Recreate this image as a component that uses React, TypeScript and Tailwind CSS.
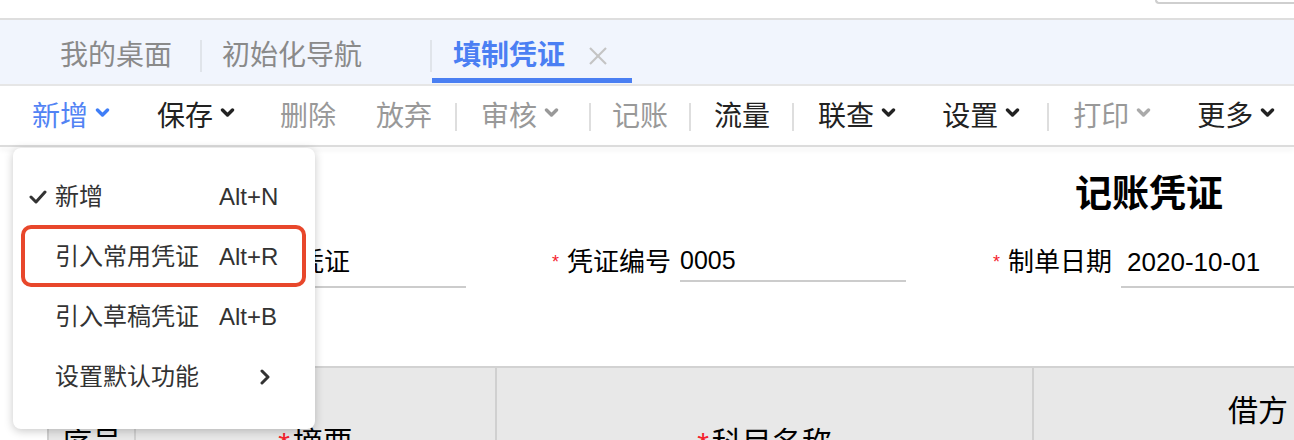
import React from "react";

const Chev = ({ color }: { color: string }) => (
  <svg width="15" height="10" viewBox="0 0 15 10" className="ml-[7px] mb-[7px] shrink-0">
    <polyline points="2.5,2 7.5,7 12.5,2" fill="none" stroke={color} strokeWidth="3.4" strokeLinecap="round" strokeLinejoin="round" />
  </svg>
);

const Sep = ({ cls }: { cls: string }) => <div className={"w-[2px] h-[28px] shrink-0 bg-[#dedede] " + cls} />;

export default function App() {
  return (
    <div className="relative w-[1294px] h-[440px] overflow-hidden bg-white font-['Liberation_Sans','Noto_Sans_CJK_SC',sans-serif] text-[#222]">
      {/* top strip */}
      <div className="h-[18px] flex justify-end items-start">
        <div className="w-[139px] h-[4px] border-l-2 border-b-2 border-[#cfcfcf] rounded-bl-[6px]" />
      </div>
      <div className="h-[2px] bg-[#dedede]" />

      {/* tab bar */}
      <div className="h-[64px] bg-[#f1f5fd] flex items-start pl-[60px]">
        <div className="h-[64px] pt-[8px] flex items-center text-[28px] leading-[32px] text-[#8a8a8a]">我的桌面</div>
        <div className="h-[64px] pt-[8px] flex items-center ml-[28px]">
          <div className="w-[2px] h-[32px] bg-[#e0e4ea]" />
        </div>
        <div className="h-[64px] pt-[8px] flex items-center ml-[20px] text-[28px] leading-[32px] text-[#8a8a8a]">初始化导航</div>
        <div className="h-[64px] pt-[8px] flex items-center ml-[68px]">
          <div className="w-[2px] h-[32px] bg-[#e0e4ea]" />
        </div>
        <div className="h-[63px] pt-[14px] border-b-[5px] border-[#4a7ff2] flex items-center pl-[21px] pr-[24px]">
          <span className="text-[28px] leading-[32px] font-bold text-[#4b7ff3]">填制凭证</span>
          <svg width="20" height="20" viewBox="0 0 20 20" className="ml-[23px]">
            <line x1="2" y1="2" x2="18" y2="18" stroke="#c4c4c4" strokeWidth="2.2" />
            <line x1="18" y1="2" x2="2" y2="18" stroke="#c4c4c4" strokeWidth="2.2" />
          </svg>
        </div>
      </div>
      <div className="h-[2px] bg-[#e6e6e6]" />

      {/* toolbar */}
      <div className="h-[59px] pt-[2px] flex items-center text-[28px] leading-[32px] whitespace-nowrap">
        <div className="flex items-center shrink-0 ml-[32px] text-[#5283f4]">新增<Chev color="#3f7ef7" /></div>
        <div className="flex items-center shrink-0 ml-[47px] text-[#222]">保存<Chev color="#222" /></div>
        <div className="shrink-0 ml-[45px] text-[#999]">删除</div>
        <div className="shrink-0 ml-[40px] text-[#999]">放弃</div>
        <Sep cls="ml-[23px]" />
        <div className="flex items-center shrink-0 ml-[24px] text-[#999]">审核<Chev color="#999" /></div>
        <Sep cls="ml-[30px]" />
        <div className="shrink-0 ml-[21px] text-[#999]">记账</div>
        <Sep cls="ml-[21px]" />
        <div className="shrink-0 ml-[23px] text-[#222]">流量</div>
        <Sep cls="ml-[22px]" />
        <div className="flex items-center shrink-0 ml-[24px] text-[#222]">联查<Chev color="#222" /></div>
        <div className="flex items-center shrink-0 ml-[46px] text-[#222]">设置<Chev color="#222" /></div>
        <Sep cls="ml-[27px]" />
        <div className="flex items-center shrink-0 ml-[24px] text-[#999]">打印<Chev color="#aaa" /></div>
        <div className="flex items-center shrink-0 ml-[46px] text-[#222]">更多<Chev color="#222" /></div>
      </div>
      <div className="h-[2px] bg-[#dcdcdc] shadow-[0_3px_5px_rgba(0,0,0,0.08)]" />

      {/* title */}
      <div className="mt-[28px] h-[40px] pl-[1075px] text-[37px] leading-[40px] font-bold text-black whitespace-nowrap">记账凭证</div>

      {/* fields */}
      <div className="mt-[32px] h-[41px] flex items-start whitespace-nowrap text-black">
        <span className="shrink-0 ml-[135px] text-[18px] leading-[30px] text-[#f5222d]">*</span>
        <span className="shrink-0 ml-[8px] text-[26px] leading-[30px]">凭证字</span>
        <div className="shrink-0 ml-[12px] w-[226px] h-[41px] border-b-2 border-[#cccccc] pl-[6px] text-[26px] leading-[30px]">记账凭证</div>

        <span className="shrink-0 ml-[86px] text-[18px] leading-[30px] text-[#f5222d]">*</span>
        <span className="shrink-0 ml-[8px] text-[26px] leading-[30px]">凭证编号</span>
        <div className="shrink-0 ml-[9px] w-[226px] h-[35px] border-b-2 border-[#cccccc] text-[25px] leading-[26px]">0005</div>

        <span className="shrink-0 ml-[87px] text-[18px] leading-[30px] text-[#f5222d]">*</span>
        <span className="shrink-0 ml-[8px] text-[26px] leading-[30px]">制单日期</span>
        <div className="shrink-0 ml-[9px] w-[260px] h-[41px] border-b-2 border-[#cccccc] pl-[6px] text-[26px] leading-[30px]">2020-10-01</div>
      </div>

      {/* table */}
      <div className="mt-[78px] ml-[47px] flex border-t-2 border-[#d2d2d2] bg-[#e8e8e8] h-[80px] text-[30px] leading-[36px] text-black whitespace-nowrap">
        <div className="shrink-0 w-[87px] border-l-2 border-[#d0d0d0] pt-[57px] pl-[13px]">序号</div>
        <div className="shrink-0 w-[361px] border-l-2 border-[#d0d0d0] pt-[57px] flex justify-center">
          <span><span className="text-[#f5222d] mr-[3px]">*</span>摘要</span>
        </div>
        <div className="shrink-0 w-[537px] border-l-2 border-[#d0d0d0] pt-[57px] flex justify-center">
          <span><span className="text-[#f5222d] mr-[3px]">*</span>科目名称</span>
        </div>
        <div className="shrink-0 w-[450px] border-l-2 border-[#d0d0d0] pt-[25px] flex justify-center">借方</div>
      </div>

      {/* dropdown menu */}
      <div className="absolute left-[13px] top-[148px] w-[302px] h-[281px] bg-white rounded-[8px] shadow-[0_2px_10px_rgba(0,0,0,0.22)] pt-[19px] text-[24px] leading-[28px] text-[#333] whitespace-nowrap">
        <div className="h-[60px] flex items-center pl-[16px]">
          <svg width="18" height="14" viewBox="0 0 18 14">
            <polyline points="2,7 7,12 16,2" fill="none" stroke="#333" strokeWidth="3" strokeLinecap="round" strokeLinejoin="round" />
          </svg>
          <span className="ml-[8px] w-[164px]">新增</span>
          <span>Alt+N</span>
        </div>
        <div className="h-[60px] flex items-center pl-[42px]">
          <span className="w-[164px]">引入常用凭证</span>
          <span>Alt+R</span>
        </div>
        <div className="h-[60px] flex items-center pl-[42px]">
          <span className="w-[164px]">引入草稿凭证</span>
          <span>Alt+B</span>
        </div>
        <div className="h-[60px] flex items-center pl-[42px]">
          <span className="w-[204px]">设置默认功能</span>
          <svg width="12" height="16" viewBox="0 0 12 16">
            <polyline points="3,2 9,8 3,14" fill="none" stroke="#333" strokeWidth="3" strokeLinecap="round" strokeLinejoin="round" />
          </svg>
        </div>
        <div className="absolute left-[8px] top-[77px] w-[285px] h-[62px] border-[4px] border-[#e8472b] rounded-[10px]" />
      </div>
    </div>
  );
}
